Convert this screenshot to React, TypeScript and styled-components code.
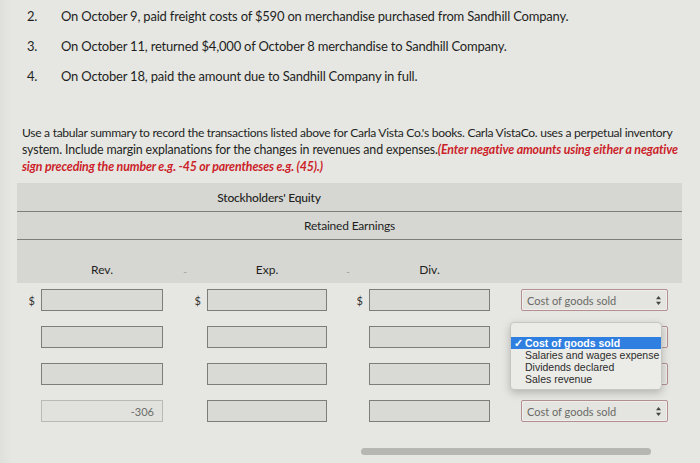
import React from 'react';
import styled, { createGlobalStyle } from 'styled-components';

const GlobalStyle = createGlobalStyle`
  html, body {
    margin: 0;
    padding: 0;
    background: #e4e5e0;
  }
  body {
    font-family: Lato, 'Open Sans', sans-serif;
    color: #1f1f1f;
  }
`;

const Page = styled.div`
  width: 700px;
  height: 463px;
  overflow: hidden;
  background: linear-gradient(90deg, #dfe0db 0px, #e6e7e2 12px, #e6e7e2 100%);
`;

const List = styled.ol`
  list-style: none;
  margin: 6px 0 0 0;
  padding: 0;
  display: flex;
  flex-direction: column;
  gap: 10px;
`;

const Item = styled.li`
  display: flex;
  font-size: 13px;
  line-height: 20px;
  letter-spacing: -0.2px;
`;

const Num = styled.span`
  width: 61px;
  padding-left: 27px;
  box-sizing: border-box;
  flex: none;
`;

const Intro = styled.p`
  margin: 38px 0 0 22px;
  font-size: 12.4px;
  line-height: 17px;
  letter-spacing: -0.15px;
  white-space: nowrap;
`;

const Tight = styled.span`
  font-size: 12.1px;
  letter-spacing: -0.3px;
`;

const Hint = styled.em`
  color: #cc1f2b;
  font-weight: 700;
`;

const Band = styled.div`
  margin: 8px 0 0 17px;
  width: 665px;
  background: #d6d7d2;
`;

const BandRow = styled.div<{ $h: number; $line?: boolean }>`
  height: ${(p) => p.$h}px;
  box-sizing: border-box;
  border-bottom: ${(p) => (p.$line ? '1px solid #7e7f7b' : 'none')};
`;

const Cols = styled.div`
  display: grid;
  grid-template-columns: 24px 122px 44px 120px 42px 121px 31px 147px;
  align-items: center;
`;

const HeadGrid = styled(Cols)`
  height: 100%;
`;

const HeadLabel = styled.div<{ $span?: string }>`
  grid-column: ${(p) => p.$span || 'auto'};
  text-align: center;
  font-size: 12px;
  font-weight: 500;
  letter-spacing: -0.2px;
`;

const Centered = styled.div`
  height: 100%;
  display: flex;
  align-items: center;
  justify-content: center;
  font-size: 12px;
  letter-spacing: -0.2px;
`;

const SubHead = styled(Cols)`
  height: 100%;
  align-items: end;
  padding-bottom: 6px;
  box-sizing: border-box;
  font-size: 12px;
`;

const SubLabel = styled.div<{ $muted?: boolean }>`
  text-align: center;
  color: ${(p) => (p.$muted ? '#9a9b97' : '#1f1f1f')};
  font-size: ${(p) => (p.$muted ? '10px' : '12px')};
`;

const Inputs = styled.div`
  position: relative;
  margin: 6px 0 0 17px;
  display: flex;
  flex-direction: column;
  gap: 15px;
`;

const Dollar = styled.div`
  text-align: right;
  padding-right: 6px;
  font-size: 11px;
  color: #333;
`;

const Field = styled.div<{ $faded?: boolean }>`
  height: 22px;
  box-sizing: border-box;
  border: 1px solid ${(p) => (p.$faded ? '#b9bab5' : '#7d7e7a')};
  background: ${(p) => (p.$faded ? '#e1e2dd' : '#d9dad5')};
  display: flex;
  align-items: center;
  justify-content: flex-end;
  padding-right: 8px;
  font-size: 11px;
  color: #6c6d69;
`;

const Select = styled.div`
  height: 22px;
  box-sizing: border-box;
  border: 1px solid #b48f8f;
  box-shadow: inset 0 0 0 1px #f1efee;
  border-radius: 2px;
  background: #e4e4e0;
  display: flex;
  align-items: center;
  justify-content: space-between;
  padding: 0 6px 0 5px;
  font-size: 11px;
  color: #6a6a66;
`;

const Menu = styled.div`
  position: absolute;
  left: 493px;
  top: 33px;
  width: 152px;
  padding: 14px 0 4px;
  box-sizing: border-box;
  background: #ebebe8;
  border: 1px solid #c6c6c2;
  border-radius: 4px;
  box-shadow: 0 3px 8px rgba(0, 0, 0, 0.22);
  font-family: 'Liberation Sans', Arial, sans-serif;
  font-size: 10.5px;
`;

const Option = styled.div<{ $active?: boolean }>`
  height: 12px;
  line-height: 12px;
  padding-left: 14px;
  position: relative;
  background: ${(p) => (p.$active ? '#2f7fe0' : 'transparent')};
  color: ${(p) => (p.$active ? '#ffffff' : '#2b2b2b')};
  font-weight: ${(p) => (p.$active ? 700 : 400)};
`;

const Check = styled.span`
  position: absolute;
  left: 3px;
`;

const Scroll = styled.div`
  margin: 26px 0 0 361px;
  width: 290px;
  height: 7px;
  border-radius: 4px;
  background: #b6b7b2;
`;

const transactions = [
  ['2.', 'On October 9, paid freight costs of $590 on merchandise purchased from Sandhill Company.'],
  ['3.', 'On October 11, returned $4,000 of October 8 merchandise to Sandhill Company.'],
  ['4.', 'On October 18, paid the amount due to Sandhill Company in full.'],
];

// the second and third selects sit under the open menu, so they show no label
const rows = [
  { dollar: true, last: '', label: true },
  { dollar: false, last: '', label: false },
  { dollar: false, last: '', label: false },
  { dollar: false, last: '-306', label: true },
];

const options = ['Cost of goods sold', 'Salaries and wages expense', 'Dividends declared', 'Sales revenue'];

const UpDown = () => (
  <svg width="5" height="9" viewBox="0 0 5 9">
    <path d="M2.5 0 L5 3.3 L0 3.3 Z M2.5 9 L5 5.7 L0 5.7 Z" fill="#444" />
  </svg>
);

const SelectBox = ({ label }: { label: boolean }) => (
  <Select>
    <span>{label ? 'Cost of goods sold' : ''}</span>
    {label && <UpDown />}
  </Select>
);

export default function App() {
  return (
    <Page>
      <GlobalStyle />
      <List>
        {transactions.map(([n, t]) => (
          <Item key={n}>
            <Num>{n}</Num>
            <span>{t}</span>
          </Item>
        ))}
      </List>

      <Intro>
        <Tight>
          Use a tabular summary to record the transactions listed above for Carla Vista Co.'s books. Carla VistaCo. uses a perpetual inventory
        </Tight>
        <br />
        system. Include margin explanations for the changes in revenues and expenses.
        <Hint>(Enter negative amounts using either a negative</Hint>
        <br />
        <Hint>sign preceding the number e.g. -45 or parentheses e.g. (45).)</Hint>
      </Intro>

      <Band>
        <BandRow $h={29} $line>
          <HeadGrid>
            <HeadLabel $span="1 / 8">Stockholders' Equity</HeadLabel>
          </HeadGrid>
        </BandRow>
        <BandRow $h={28} $line>
          <Centered>Retained Earnings</Centered>
        </BandRow>
        <BandRow $h={43}>
          <SubHead>
            <span />
            <SubLabel>Rev.</SubLabel>
            <SubLabel $muted>-</SubLabel>
            <SubLabel>Exp.</SubLabel>
            <SubLabel $muted>-</SubLabel>
            <SubLabel>Div.</SubLabel>
            <span />
            <span />
          </SubHead>
        </BandRow>
      </Band>

      <Inputs>
        {rows.map((r, i) => (
          <Cols key={i}>
            <Dollar>{r.dollar ? '$' : ''}</Dollar>
            <Field $faded={r.last !== ''}>{r.last}</Field>
            <Dollar>{r.dollar ? '$' : ''}</Dollar>
            <Field />
            <Dollar>{r.dollar ? '$' : ''}</Dollar>
            <Field />
            <span />
            <SelectBox label={r.label} />
          </Cols>
        ))}
        <Menu>
          {options.map((o, i) => (
            <Option key={o} $active={i === 0}>
              {i === 0 && <Check>✓</Check>}
              {o}
            </Option>
          ))}
        </Menu>
      </Inputs>

      <Scroll />
    </Page>
  );
}
